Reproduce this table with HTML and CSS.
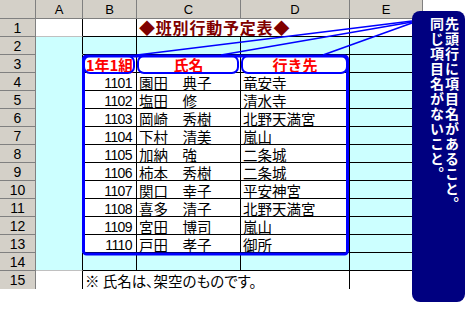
FILE: index.html
```html
<!DOCTYPE html>
<html lang="ja">
<head>
<meta charset="utf-8">
<link rel="stylesheet" href="styles.css">
</head>
<body>
<div class="page">
  <div class="sheet">
    <div class="c hd"></div><div class="c hd">A</div><div class="c hd">B</div><div class="c hd">C</div><div class="c hd">D</div><div class="c hd">E</div>

    <div class="c rh">1</div><div class="c ca first"></div><div class="c"></div><div class="c title nor">◆班別行動予定表◆</div><div class="c"></div><div class="c"></div>
    <div class="c rh">2</div><div class="c ca"></div><div class="c cy"></div><div class="c cy"></div><div class="c cy"></div><div class="c cy"></div>
    <div class="c rh">3</div><div class="c ca"></div><div class="c head">1年1組</div><div class="c head">氏名</div><div class="c head">行き先</div><div class="c cy"></div>

    <div class="c rh">4</div><div class="c ca"></div><div class="c num">1101</div><div class="c">園田　典子</div><div class="c">竜安寺</div><div class="c cy"></div>
    <div class="c rh">5</div><div class="c ca"></div><div class="c num">1102</div><div class="c">塩田　修</div><div class="c">清水寺</div><div class="c cy"></div>
    <div class="c rh">6</div><div class="c ca"></div><div class="c num">1103</div><div class="c">岡崎　秀樹</div><div class="c">北野天満宮</div><div class="c cy"></div>
    <div class="c rh">7</div><div class="c ca"></div><div class="c num">1104</div><div class="c">下村　清美</div><div class="c">嵐山</div><div class="c cy"></div>
    <div class="c rh">8</div><div class="c ca"></div><div class="c num">1105</div><div class="c">加納　強</div><div class="c">二条城</div><div class="c cy"></div>
    <div class="c rh">9</div><div class="c ca"></div><div class="c num">1106</div><div class="c">柿本　秀樹</div><div class="c">二条城</div><div class="c cy"></div>
    <div class="c rh">10</div><div class="c ca"></div><div class="c num">1107</div><div class="c">関口　幸子</div><div class="c">平安神宮</div><div class="c cy"></div>
    <div class="c rh">11</div><div class="c ca"></div><div class="c num">1108</div><div class="c">喜多　清子</div><div class="c">北野天満宮</div><div class="c cy"></div>
    <div class="c rh">12</div><div class="c ca"></div><div class="c num">1109</div><div class="c">宮田　博司</div><div class="c">嵐山</div><div class="c cy"></div>
    <div class="c rh">13</div><div class="c ca"></div><div class="c num">1110</div><div class="c">戸田　孝子</div><div class="c">御所</div><div class="c cy"></div>

    <div class="c rh">14</div><div class="c ca last"></div><div class="c cy"></div><div class="c cy"></div><div class="c cy"></div><div class="c cy"></div>
    <div class="c rh nob">15</div><div class="c ca foot"></div><div class="c note nor nob">※ 氏名は、架空のものです。</div><div class="c nor nob"></div><div class="c nob"></div><div class="c nor nob"></div>
  </div>

  <svg class="shapes" width="475" height="323" viewBox="0 0 475 323">
    <g fill="none" stroke="#0000ff">
      <line x1="137" y1="55" x2="412" y2="21" stroke-width="1.6"/>
      <line x1="221" y1="55" x2="412" y2="22" stroke-width="1.6"/>
      <line x1="323" y1="55" x2="412" y2="23" stroke-width="1.6"/>
      <rect x="83.5" y="56" width="264" height="198" rx="3" stroke-width="3"/>
      <rect x="84" y="56" width="50" height="17" rx="6" stroke-width="2"/>
      <rect x="138" y="56" width="100" height="17" rx="6" stroke-width="2"/>
      <rect x="242" y="56" width="105" height="17" rx="6" stroke-width="2"/>
    </g>
  </svg>

  <div class="callout">先頭行に項目名があること。<br>同じ項目名がないこと。</div>
</div>
</body>
</html>
```

FILE: styles.css
```css
body {
  margin: 0;
  background: #ffffff;
  font-family: "Noto Sans CJK JP", sans-serif;
}

.page {
  position: relative;
  width: 475px;
  height: 323px;
  overflow: hidden;
}

.sheet {
  display: grid;
  grid-template-columns: 36px 47px 54px 104px 109px 73px;
  grid-template-rows: 19px repeat(15, 18px);
}

.c {
  box-sizing: border-box;
  border-right: 1px solid #000;
  border-bottom: 1px solid #000;
  white-space: nowrap;
  font-size: 14.5px;
  line-height: 16px;
  padding: 2px 2px 0;
  color: #000;
}

.hd {
  background: #d4d0c8;
  border-color: #808080;
  text-align: center;
  font-family: "Liberation Sans", sans-serif;
  font-size: 13px;
  line-height: 17px;
  padding: 1px 0 0;
}

.rh {
  background: #d4d0c8;
  border-color: #808080;
  text-align: center;
  font-family: "Liberation Sans", sans-serif;
  font-size: 14px;
  line-height: 16px;
  padding: 1px 0 0;
}

.ca {
  background: #ccffff;
  border-bottom-color: #ccffff;
}

.ca.first {
  background: #ffffff;
  border-bottom-color: #c0c0c0;
}

.ca.last {
  border-bottom-color: #c0c0c0;
}

.ca.foot {
  background: transparent;
  border-bottom: none;
}

.cy {
  background: #ccffff;
}

.nor {
  border-right: none;
}

.nob {
  border-bottom: none;
}

.title {
  color: #800000;
  font-weight: bold;
  font-size: 16px;
  letter-spacing: 0.8px;
  line-height: 17px;
  padding: 0 0 0 2px;
}

.head {
  color: #ff0000;
  font-weight: bold;
  font-size: 15px;
  text-align: center;
  padding: 2px 0 0;
}

.num {
  text-align: right;
  font-family: "Liberation Sans", sans-serif;
  font-size: 14px;
  letter-spacing: -0.6px;
  padding-right: 4px;
}

.note {
  font-feature-settings: "palt";
}

.shapes {
  position: absolute;
  left: 0;
  top: 0;
  pointer-events: none;
}

.callout {
  position: absolute;
  left: 412px;
  top: 11px;
  width: 53px;
  height: 291px;
  box-sizing: border-box;
  padding: 6px 6px 0 0;
  background: #000080;
  border-radius: 8px;
  writing-mode: vertical-rl;
  color: #ffffff;
  font-weight: bold;
  font-size: 14px;
  line-height: 15px;
  letter-spacing: 1px;
}
```
